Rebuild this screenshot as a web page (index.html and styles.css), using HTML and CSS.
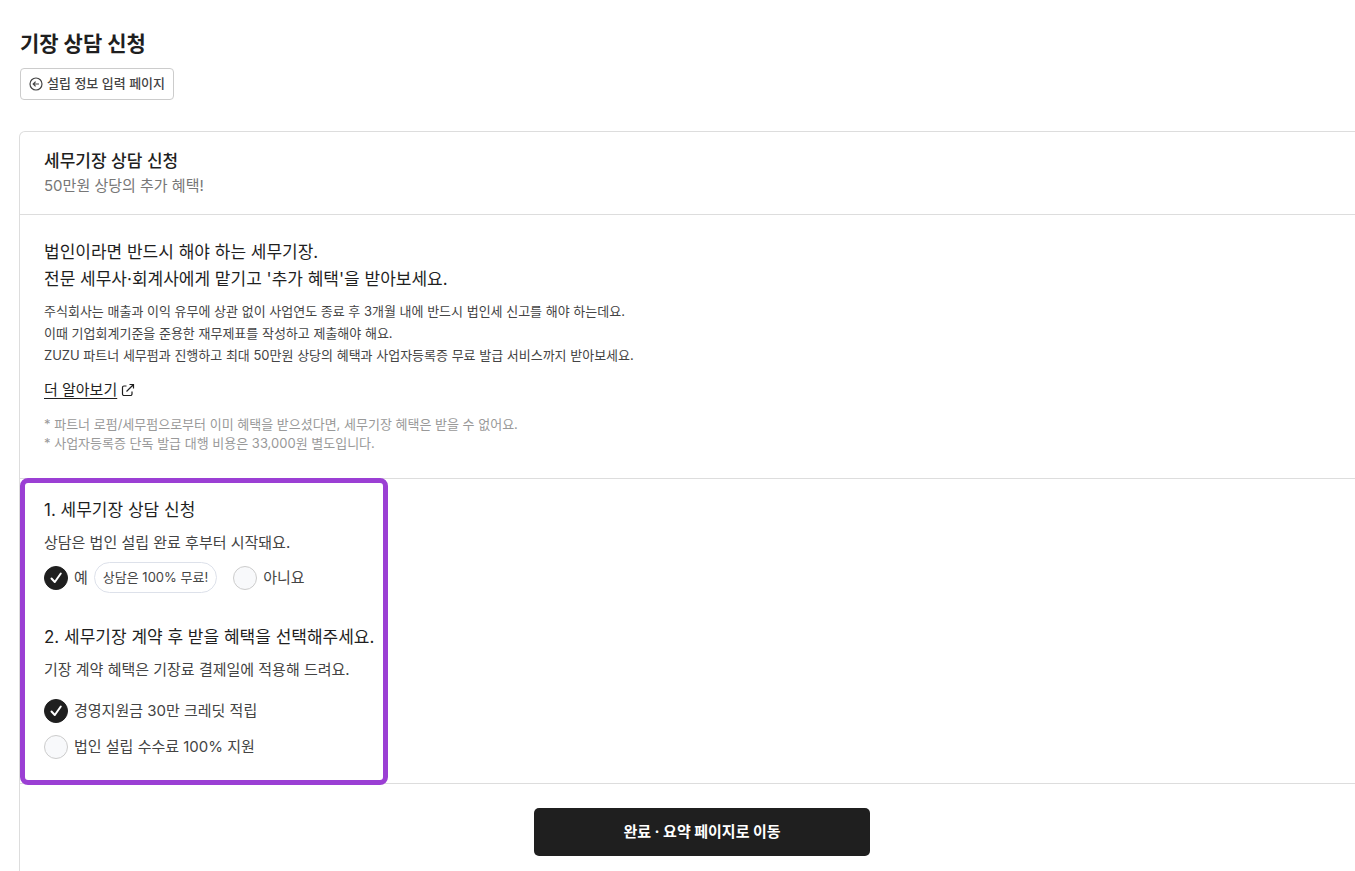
FILE: index.html
```
<!DOCTYPE html>
<html lang="ko">
<head>
    <meta charset="UTF-8">
    <meta name="viewport" content="width=device-width, initial-scale=1.0">
    <title>기장 상담 신청</title>
    <link rel="stylesheet" href="styles.css">
</head>
<body>
    <main class="page">
        <h1>기장 상담 신청</h1>
        <button type="button" class="back-button">
            <svg width="14" height="14" viewBox="0 0 14 14" aria-hidden="true">
                <circle cx="7" cy="7" r="6" />
                <path d="M10 7H4.2M6.6 4.6L4.2 7l2.4 2.4" />
            </svg>
            <span>설립 정보 입력 페이지</span>
        </button>

        <div class="card">
            <div class="card-header">
                <h2>세무기장 상담 신청</h2>
                <p>50만원 상당의 추가 혜택!</p>
            </div>

            <div class="card-intro">
                <p class="lead">법인이라면 반드시 해야 하는 세무기장.<br>전문 세무사·회계사에게 맡기고 '추가 혜택'을 받아보세요.</p>
                <p class="details">주식회사는 매출과 이익 유무에 상관 없이 사업연도 종료 후 3개월 내에 반드시 법인세 신고를 해야 하는데요.<br>이때 기업회계기준을 준용한 재무제표를 작성하고 제출해야 해요.<br>ZUZU 파트너 세무펌과 진행하고 최대 50만원 상당의 혜택과 사업자등록증 무료 발급 서비스까지 받아보세요.</p>
                <a href="#" class="more-link">
                    <span>더 알아보기</span>
                    <svg width="14" height="14" viewBox="0 0 14 14" aria-hidden="true">
                        <path d="M5.5 3H3a1.5 1.5 0 0 0-1.5 1.5V11A1.5 1.5 0 0 0 3 12.5h6.5A1.5 1.5 0 0 0 11 11V8.5M8.5 1.5h4v4M12.5 1.5l-7 7" />
                    </svg>
                </a>
                <p class="notes">* 파트너 로펌/세무펌으로부터 이미 혜택을 받으셨다면, 세무기장 혜택은 받을 수 없어요.<br>* 사업자등록증 단독 발급 대행 비용은 33,000원 별도입니다.</p>
            </div>

            <form class="card-form">
                <div class="questions">
                    <!-- Question 1 -->
                    <h3>1. 세무기장 상담 신청</h3>
                    <p class="hint">상담은 법인 설립 완료 후부터 시작돼요.</p>
                    <div class="options-row">
                        <label class="option" for="consultYes">
                            <span class="radio">
                                <input type="radio" id="consultYes" name="consult" checked>
                                <svg viewBox="0 0 24 24" aria-hidden="true"><path d="M7.5 12.5l3.3 3.5 6-8.5" /></svg>
                            </span>
                            예
                            <span class="chip">상담은 100% 무료!</span>
                        </label>
                        <label class="option" for="consultNo">
                            <span class="radio">
                                <input type="radio" id="consultNo" name="consult">
                                <svg viewBox="0 0 24 24" aria-hidden="true"><path d="M7.5 12.5l3.3 3.5 6-8.5" /></svg>
                            </span>
                            아니요
                        </label>
                    </div>

                    <!-- Question 2 -->
                    <h3>2. 세무기장 계약 후 받을 혜택을 선택해주세요.</h3>
                    <p class="hint">기장 계약 혜택은 기장료 결제일에 적용해 드려요.</p>
                    <div class="options-list">
                        <label class="option" for="benefitCredit">
                            <span class="radio">
                                <input type="radio" id="benefitCredit" name="benefit" checked>
                                <svg viewBox="0 0 24 24" aria-hidden="true"><path d="M7.5 12.5l3.3 3.5 6-8.5" /></svg>
                            </span>
                            경영지원금 30만 크레딧 적립
                        </label>
                        <label class="option" for="benefitFee">
                            <span class="radio">
                                <input type="radio" id="benefitFee" name="benefit">
                                <svg viewBox="0 0 24 24" aria-hidden="true"><path d="M7.5 12.5l3.3 3.5 6-8.5" /></svg>
                            </span>
                            법인 설립 수수료 100% 지원
                        </label>
                    </div>
                </div>

                <div class="card-footer">
                    <button type="button" class="submit-button">완료 · 요약 페이지로 이동</button>
                </div>
            </form>
        </div>
    </main>
</body>
</html>
```
FILE: styles.css
```
* {
    box-sizing: border-box;
}

body {
    margin: 0;
    background-color: #fff;
    color: #1f1f1f;
    font-family: Inter, "Noto Sans CJK KR", sans-serif;
    font-size: 15px;
    line-height: 24px;
    overflow-x: hidden;
}

h1, h2, h3, p {
    margin: 0;
}

button, input {
    font-family: inherit;
    margin: 0;
}

svg {
    fill: none;
    stroke: currentColor;
    stroke-width: 1.2;
}

.page {
    padding: 28px 0 0 19px;
}

h1 {
    font-size: 21px;
    line-height: 32px;
    font-weight: 700;
    padding-left: 1px;
}

.back-button {
    display: flex;
    align-items: center;
    gap: 4px;
    height: 32px;
    margin: 8px 0 31px 1px;
    padding: 0 8px;
    border: 1px solid #ccc;
    border-radius: 4px;
    background-color: #fff;
    color: #444;
    font-size: 13px;
    font-weight: 500;
    cursor: pointer;
}

.back-button span {
    padding-bottom: 3px;
}

/* The card runs past the right edge of the window */
.card {
    margin-right: -30px;
    border: 1px solid #ddd;
    border-bottom: none;
    border-radius: 6px 6px 0 0;
}

.card-header {
    padding: 16px 24px;
    border-bottom: 1px solid #ddd;
}

.card-header p {
    color: #777;
}

h2 {
    font-size: 17px;
    line-height: 26px;
    font-weight: 500;
}

.card-intro {
    padding: 24px 24px 25px;
    border-bottom: 1px solid #ddd;
}

.lead {
    font-size: 17px;
    line-height: 27px;
}

.details {
    margin-top: 7px;
    color: #444;
    font-size: 13px;
    line-height: 22px;
}

.more-link {
    display: flex;
    align-items: center;
    gap: 4px;
    width: fit-content;
    margin: 12px 0 13px;
    color: #1f1f1f;
    text-decoration: none;
}

.more-link span {
    text-decoration: underline;
    text-underline-offset: 3px;
}

.notes {
    color: #999;
    font-size: 13px;
    line-height: 19px;
}

.questions {
    position: relative;
    width: fit-content;
    padding: 18px 14px 24px 24px;
}

/* Purple frame, drawn over the borders of the section */
.questions::after {
    content: "";
    position: absolute;
    inset: -1px 0 -2px;
    border: 5px solid #9b3fd4;
    border-radius: 8px;
    pointer-events: none;
}

h3 {
    font-size: 17px;
    line-height: 26px;
    font-weight: 400;
}

.hint {
    margin-top: 8px;
    color: #444;
}

.options-row {
    display: flex;
    gap: 16px;
    margin: 7px 0 31px;
}

.options-list {
    display: flex;
    flex-direction: column;
    gap: 12px;
    margin-top: 17px;
}

.option {
    display: flex;
    align-items: center;
    gap: 6px;
    color: #444;
    cursor: pointer;
}

.radio {
    display: grid;
    width: 24px;
    height: 24px;
}

.radio input, .radio svg {
    grid-area: 1 / 1;
    width: 24px;
    height: 24px;
}

.radio input {
    appearance: none;
    border: 1px solid #ccc;
    border-radius: 50%;
    background-color: #f8f9fb;
    cursor: pointer;
}

.radio input:checked {
    border-color: #1f1f1f;
    background-color: #1f1f1f;
}

.radio svg {
    visibility: hidden;
    color: #fff;
    stroke-width: 2;
    stroke-linecap: round;
    stroke-linejoin: round;
    pointer-events: none;
}

.radio input:checked + svg {
    visibility: visible;
}

.chip {
    height: 31px;
    padding: 0 8px;
    border: 1px solid #dde1ea;
    border-radius: 16px;
    font-size: 13px;
    line-height: 29px;
}

.card-footer {
    display: flex;
    justify-content: center;
    padding: 24px 24px 15px;
    border-top: 1px solid #ddd;
}

.submit-button {
    width: 336px;
    height: 48px;
    padding-bottom: 4px;
    border: none;
    border-radius: 5px;
    background-color: #1f1f1f;
    color: #fff;
    font-size: 15px;
    font-weight: 700;
    cursor: pointer;
}
```
